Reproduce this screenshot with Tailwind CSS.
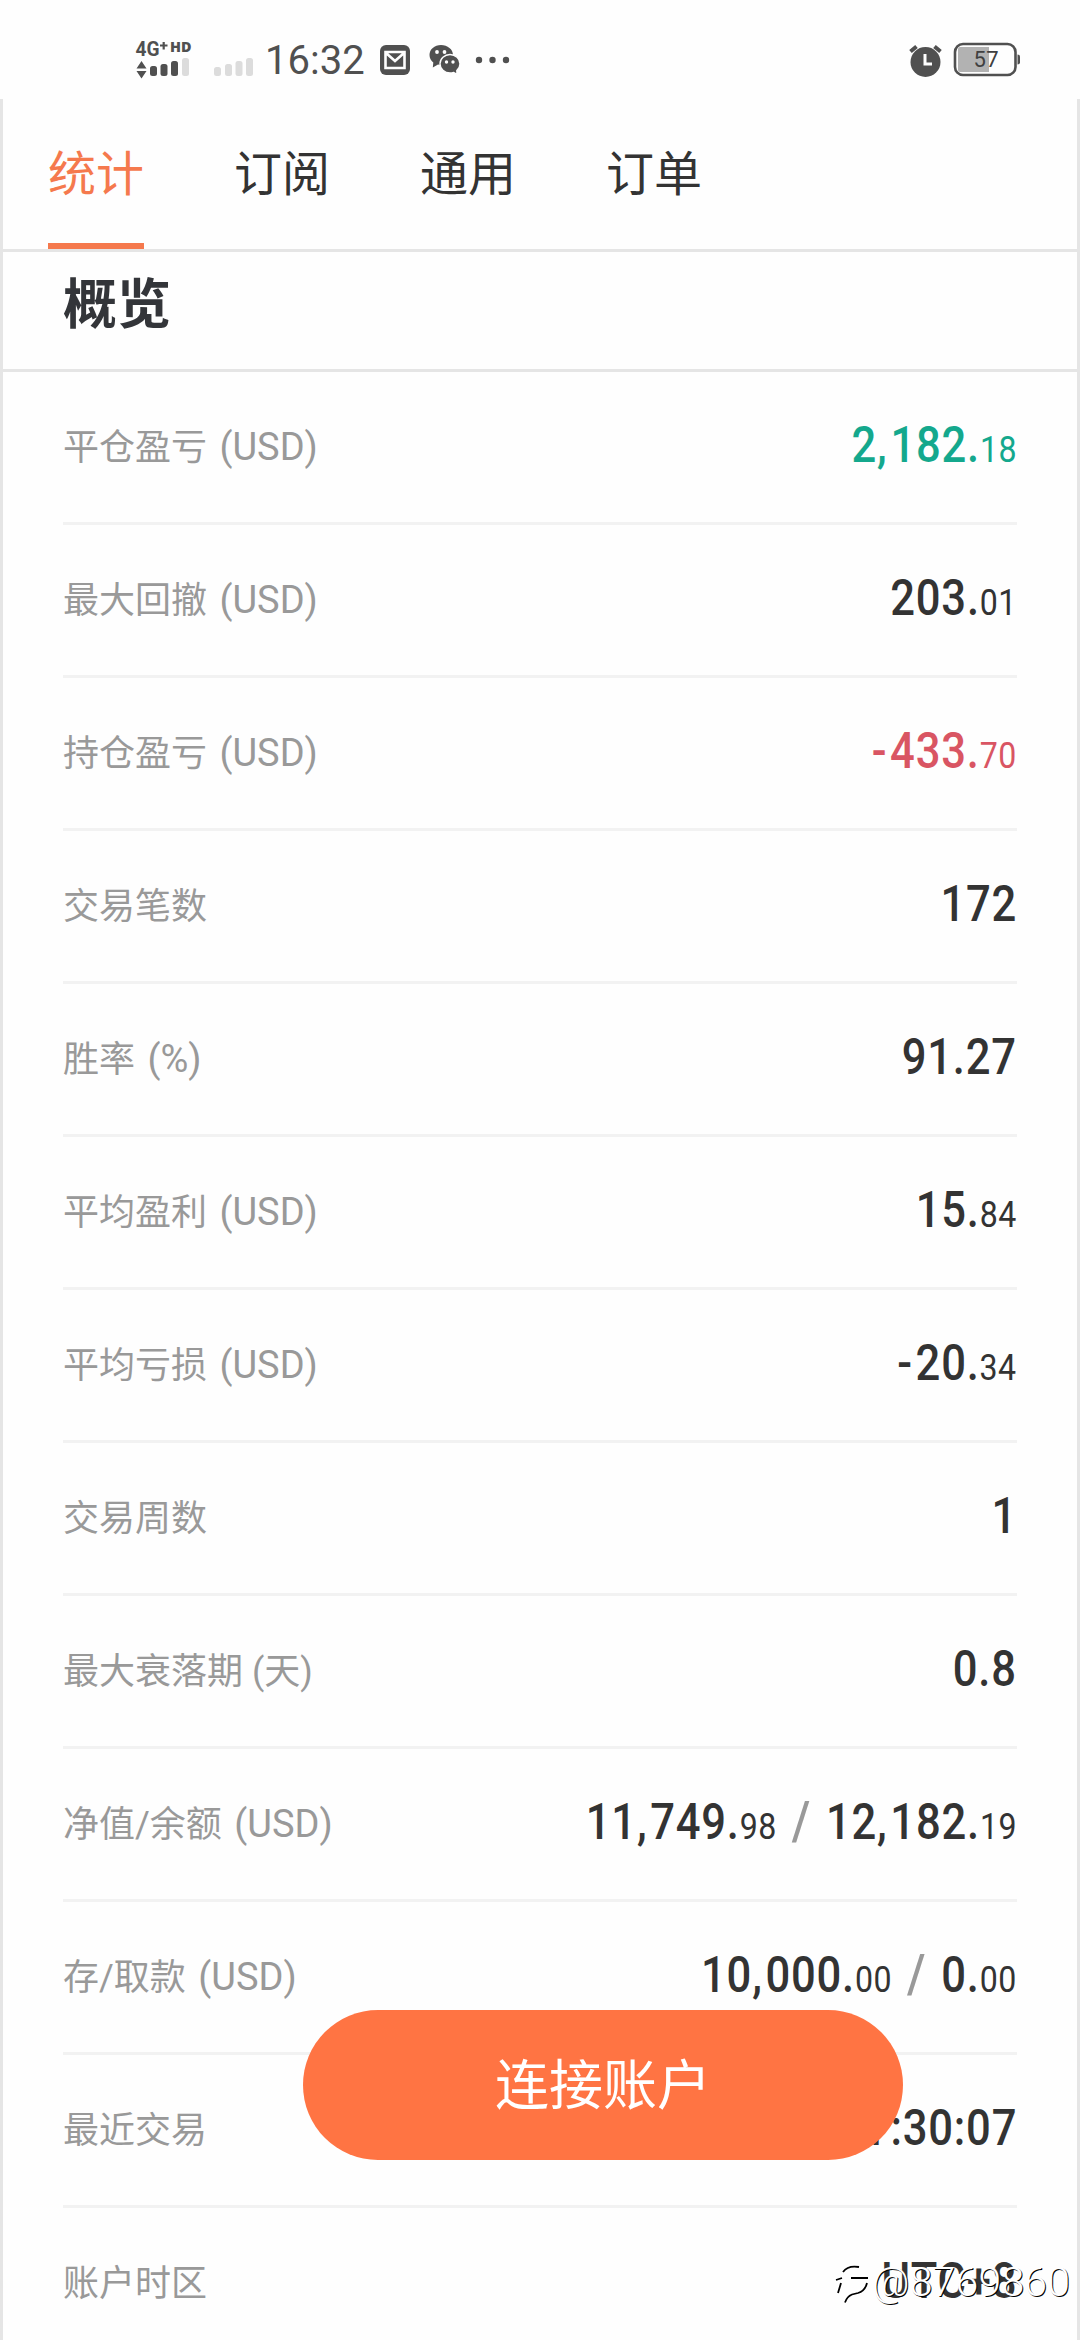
<!DOCTYPE html>
<html lang="zh-CN">
<head>
<meta charset="utf-8">
<title>概览</title>
<script src="https://cdn.jsdelivr.net/npm/@tailwindcss/browser@4"></script>
</head>
<body class="relative flex h-[2340px] w-[1080px] flex-col overflow-hidden bg-[#fefefe] font-['Roboto','Noto_Sans_CJK_SC',sans-serif] text-[#333]">

<!-- status bar -->
<header class="flex h-[99px] shrink-0 items-start text-[#505050]">
  <svg class="block h-[99px] w-[260px]" viewBox="0 0 260 99" fill="#505050">
    <text x="135.500" y="56" font-family="Roboto" font-weight="700" font-size="19.500" textLength="24" lengthAdjust="spacingAndGlyphs">4G</text>
    <path d="M160 45.500h7.500M163.700 42v7.500" stroke="#505050" stroke-width="2.200"/>
    <text x="170" y="52" font-family="Open Sans" font-weight="800" font-size="13.500" textLength="21.500" lengthAdjust="spacingAndGlyphs">HD</text>
    <path d="M136.500 68.500l5-7.500 5 7.500zM136.500 71l5 7.500 5-7.500z"/>
    <rect x="150" y="66" width="7" height="10" rx="2.500"/><rect x="160.500" y="64" width="7" height="12" rx="2.500"/><rect x="171" y="61" width="7" height="15" rx="2.500"/>
    <g fill="#dcdcdc"><rect x="182" y="58" width="7" height="18" rx="2.500"/><rect x="214" y="67" width="7" height="9" rx="2.500"/><rect x="225" y="64" width="7" height="12" rx="2.500"/><rect x="235.500" y="61" width="7" height="15" rx="2.500"/><rect x="246" y="58" width="7" height="18" rx="2.500"/></g>
  </svg>
  <span class="ml-[5px] mt-[37px] w-[101px] text-[40px] leading-[47px] tracking-[0px]">16:32</span>
  <svg class="block h-[99px] w-[144px]" viewBox="366 0 144 99" fill="#505050">
    <rect x="380" y="45" width="30" height="30" rx="6"/>
    <path d="M385.500 52h19v16h-19zM386 53l9 8 9-8" fill="none" stroke="#fefefe" stroke-width="2.600"/>
    <path d="M441 45c-6.500 0-11.500 4.400-11.500 10 0 3 1.500 5.700 3.800 7.600l-.5 5 5.200-3c6 1.500 15-2 15-9.600 0-5.600-5.500-10-12-10z"/>
    <path d="M450 54.500c-5.500 0-10 4.100-10 9.200s4.500 9.300 10 9.300c1.400 0 2.600-.2 3.700-.6l3.300 2-.2-3.900c2-1.700 3.200-4 3.200-6.800 0-5.100-4.500-9.200-10-9.200z" stroke="#fefefe" stroke-width="1.400"/>
    <g fill="#fefefe"><circle cx="437" cy="52" r="1.900"/><circle cx="444.500" cy="52" r="1.900"/><circle cx="446.500" cy="62" r="1.700"/><circle cx="453" cy="62" r="1.700"/></g>
    <circle cx="479" cy="60" r="3.200"/><circle cx="492.500" cy="60" r="3.200"/><circle cx="506" cy="60" r="3.200"/>
  </svg>
  <svg class="ml-auto block h-[99px] w-[180px]" viewBox="900 0 180 99" fill="#505050">
    <circle cx="925.500" cy="62" r="15"/>
    <path d="M910.500 51.500l6-5M940.500 51.500l-6-5" stroke="#505050" stroke-width="4"/>
    <path d="M925 54v10h7" fill="none" stroke="#fefefe" stroke-width="3"/>
    <rect x="955" y="44" width="60.500" height="31" rx="8" fill="none" stroke="#505050" stroke-width="2.600"/>
    <path d="M960 47h29v25h-29a2 2 0 0 1-2-2v-21a2 2 0 0 1 2-2z" fill="#b2b2b2"/>
    <path d="M1017.500 54.500q2.500 0 2.500 2v6q0 2-2.500 2z"/>
    <text x="973.500" y="67" font-family="Roboto" font-size="22" textLength="25" fill="#404040">57</text>
  </svg>
</header>

<main class="flex grow flex-col border-x-[3px] border-[#e5e5e5]">
  <nav class="flex h-[153px] shrink-0 gap-[90px] border-b-[3px] border-[#e5e5e5] pl-[45px] text-[48px] leading-[151px]">
    <a class="h-[150px] border-b-[6px] border-[#f5794d] text-[#f5794d]">统计</a>
    <a>订阅</a>
    <a>通用</a>
    <a>订单</a>
  </nav>
  <h1 class="h-[120px] shrink-0 border-b-[3px] border-[#e5e5e5] pl-[60px] text-[54px] leading-[107px] font-bold text-[#333539]">概览</h1>

  <section class="mx-[60px] text-[49.5px] font-medium [&>div]:flex [&>div]:h-[153px] [&>div]:items-center [&>div]:justify-between [&>div]:border-b-[3px] [&>div]:border-[#f2f2f2] [&_dt]:pt-[2px] [&_dt]:text-[36px] [&_dt]:font-normal [&_dt]:text-[#999] [&_dt]:whitespace-pre [&_dt>span]:pl-[3px] [&_dt>span]:text-[38px] [&_dt>span]:leading-[40px] [&_dd]:origin-right [&_dd]:scale-x-[0.88] [&_dd]:pb-[3px] [&_dd]:tracking-[0.9px] [&_dd]:whitespace-pre [&_small]:text-[36.5px] [&_small]:font-[450] [&_small]:tracking-[0.5px] [&_i]:tracking-[4px] [&_i]:not-italic">
    <div><dt>平仓盈亏<span> (USD)</span></dt><dd class="text-[#14a88d]">2<i>,</i>182.<small>18</small></dd></div>
    <div><dt>最大回撤<span> (USD)</span></dt><dd>203.<small>01</small></dd></div>
    <div><dt>持仓盈亏<span> (USD)</span></dt><dd class="text-[#d95563]"><i>-</i>433.<small>70</small></dd></div>
    <div><dt>交易笔数</dt><dd>172</dd></div>
    <div><dt>胜率<span> (%)</span></dt><dd>91.27</dd></div>
    <div><dt>平均盈利<span> (USD)</span></dt><dd>15.<small>84</small></dd></div>
    <div><dt>平均亏损<span> (USD)</span></dt><dd><i>-</i>20.<small>34</small></dd></div>
    <div><dt>交易周数</dt><dd>1</dd></div>
    <div><dt>最大衰落期 (天)</dt><dd>0.8</dd></div>
    <div><dt>净值/余额<span> (USD)</span></dt><dd>11<i>,</i>749.<small>98</small><span class="px-[17px] text-[54px] leading-[40px] text-[#999]">/</span>12<i>,</i>182.<small>19</small></dd></div>
    <div><dt>存/取款<span> (USD)</span></dt><dd>10<i>,</i>000.<small>00</small><span class="px-[17px] text-[54px] leading-[40px] text-[#999]">/</span>0.<small>00</small></dd></div>
    <div><dt>最近交易</dt><dd><i>1</i>:30:07</dd></div>
    <div><dt>账户时区</dt><dd>UTC+8</dd></div>
  </section>
</main>

<!-- floating action -->
<button class="absolute left-[303px] top-[2010px] h-[150px] w-[600px] rounded-full bg-[#ff7443] pt-[2px] text-[54px] leading-[150px] text-white">连接账户</button>

<!-- watermark -->
<div class="absolute left-[834px] top-[2258px] flex items-center text-[41px] leading-[48px] font-light text-white [text-shadow:1px_1px_0_#000]">
  <svg class="block h-[48px] w-[38px]" viewBox="0 0 38 48" fill="none" stroke-width="1.800">
    <g stroke="#fff" stroke-width="2.500" transform="translate(-1.500 -1.500)"><path d="M9 14Q14 7 25 9M17 20h17M2 22l6-2M4 35l3-10M33 25q-2 8-9 10l-6 1.500q-5 2-7 8"/></g>
    <path stroke="#000" d="M9 14Q14 7 25 9M17 20h17M2 22l6-2M4 35l3-10M33 25q-2 8-9 10l-6 1.500q-5 2-7 8"/>
  </svg>
  <span class="tracking-[0.2px]">@8769860</span>
</div>
</body>
</html>
